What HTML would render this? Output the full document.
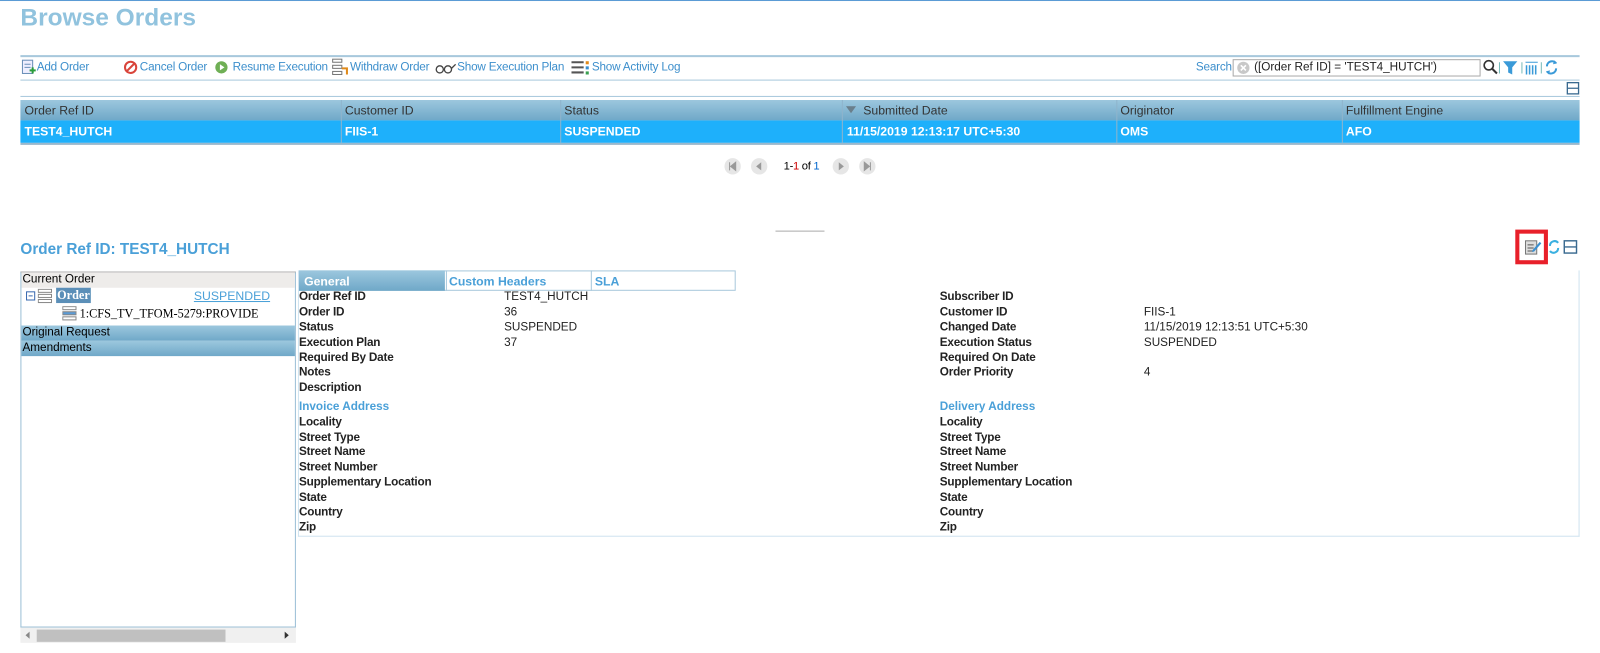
<!DOCTYPE html>
<html><head><meta charset="utf-8"><style>
*{margin:0;padding:0;box-sizing:border-box}
body{width:1600px;height:652px;position:relative;background:#fff;font-family:"Liberation Sans",Arial,sans-serif;font-size:12px;color:#222;overflow:hidden}
#w{position:absolute;left:0;top:0;width:1568px;height:640px;transform:scale(1.0204);transform-origin:0 0}
.a{position:absolute;white-space:nowrap}
.tb{color:#3d8fcc;font-size:11.5px;top:60px;letter-spacing:-0.2px}
.hdr{background:linear-gradient(#9cc7de,#6fa8c8);color:#333;font-size:12px}
.lbl{font-weight:bold;color:#222;font-size:11.5px;letter-spacing:-0.2px}
.val{color:#222;font-size:11.5px}
.sec{color:#4aa0d8;font-weight:bold;font-size:11.5px}
.pg{width:16px;height:16px;border-radius:50%;background:#e6e6e6;top:155px}
</style></head><body><div id="w">
<div class="a" style="left:0;top:0;width:1568px;height:1px;background:#5b9bd5"></div>
<div class="a" style="left:20px;top:4px;font-size:24px;font-weight:bold;color:#91c3de">Browse Orders</div>

<div class="a" style="left:20px;top:54px;width:1528px;height:2px;background:#a8c8dc"></div>
<div class="a" style="left:20px;top:78px;width:1528px;height:1px;background:#a8c8dc"></div>
<svg class="a" style="left:20px;top:58px" width="16" height="16"><rect x="2" y="1" width="10" height="13" fill="#eef" stroke="#6a8fb8"/><line x1="4" y1="5" x2="10" y2="5" stroke="#6a8fb8"/><line x1="4" y1="8" x2="10" y2="8" stroke="#6a8fb8"/><rect x="9" y="10" width="6" height="2" fill="#2a9d3a"/><rect x="11" y="8" width="2" height="6" fill="#2a9d3a"/></svg>
<div class="a tb" style="left:36px">Add Order</div>
<svg class="a" style="left:121px;top:59px" width="14" height="14"><circle cx="7" cy="7" r="5.5" fill="none" stroke="#d9453b" stroke-width="2"/><line x1="3.5" y1="10.5" x2="10.5" y2="3.5" stroke="#d9453b" stroke-width="2"/></svg>
<div class="a tb" style="left:137px">Cancel Order</div>
<svg class="a" style="left:210px;top:59px" width="14" height="14"><circle cx="7" cy="7" r="6" fill="#6faf55"/><path d="M5.5 4v6l4.5-3z" fill="#fff"/></svg>
<div class="a tb" style="left:228px">Resume Execution</div>
<svg class="a" style="left:325px;top:57px" width="18" height="18"><rect x="1" y="1" width="9" height="3" fill="none" stroke="#777"/><rect x="1" y="7" width="9" height="3" fill="none" stroke="#777"/><rect x="1" y="13" width="9" height="3" fill="none" stroke="#777"/><path d="M10 10h5v6" fill="none" stroke="#e08a1a" stroke-width="2"/></svg>
<div class="a tb" style="left:343px">Withdraw Order</div>
<svg class="a" style="left:426px;top:61px" width="22" height="12"><circle cx="5" cy="7" r="3.5" fill="none" stroke="#444" stroke-width="1.3"/><circle cx="13" cy="7" r="3.5" fill="none" stroke="#444" stroke-width="1.3"/><path d="M8.5 7h1M16.5 6l4-4" stroke="#444" stroke-width="1.3"/></svg>
<div class="a tb" style="left:448px">Show Execution Plan</div>
<svg class="a" style="left:560px;top:59px" width="18" height="14"><path d="M0 2h12M0 7h12M0 12h12" stroke="#555" stroke-width="2"/><rect x="14" y="1" width="3" height="3" fill="#e08a1a"/><rect x="14" y="6" width="3" height="3" fill="#3a8fd0"/><rect x="14" y="11" width="3" height="3" fill="#3aa050"/></svg>
<div class="a tb" style="left:580px">Show Activity Log</div>

<div class="a tb" style="left:1172px">Search</div>
<div class="a" style="left:1208px;top:58px;width:243px;height:17px;border:1px solid #aaa;background:#fff"></div>
<svg class="a" style="left:1212px;top:60px" width="13" height="13"><circle cx="6.5" cy="6.5" r="6" fill="#c8c8c8"/><path d="M4 4l5 5M9 4l-5 5" stroke="#fff" stroke-width="1.6"/></svg>
<div class="a" style="left:1229px;top:60px;font-size:11.5px;color:#222">([Order Ref ID] = 'TEST4_HUTCH')</div>
<svg class="a" style="left:1453px;top:58px" width="16" height="16"><circle cx="6" cy="6" r="4.5" fill="none" stroke="#333" stroke-width="1.6"/><line x1="9.5" y1="9.5" x2="14" y2="14" stroke="#333" stroke-width="2"/></svg>
<div class="a" style="left:1469px;top:61px;width:1px;height:11px;background:#7bb"></div>
<svg class="a" style="left:1472px;top:59px" width="16" height="15"><path d="M1 1h14l-5 6v7l-4-2v-5z" fill="#3a9ad8"/></svg>
<div class="a" style="left:1491px;top:61px;width:1px;height:11px;background:#7bb"></div>
<svg class="a" style="left:1494px;top:59px" width="14" height="15"><path d="M1 2h12" stroke="#3a9ad8"/><path d="M2 5v9M5 5v9M8 5v9M11 5v9" stroke="#3a9ad8" stroke-width="1.5"/></svg>
<div class="a" style="left:1510px;top:61px;width:1px;height:11px;background:#7bb"></div>
<svg class="a" style="left:1513px;top:58px" width="15" height="16"><path d="M3 7a5 5 0 0 1 9-3M12 9a5 5 0 0 1-9 3" fill="none" stroke="#3a9ad8" stroke-width="2"/><path d="M10 1l3 3-4 1zM5 15l-3-3 4-1z" fill="#3a9ad8"/></svg>

<div class="a" style="left:20px;top:94px;width:1528px;height:1px;background:#a8c8dc"></div>
<svg class="a" style="left:1535px;top:80px" width="13" height="13"><rect x="1" y="1" width="11" height="11" fill="#fff" stroke="#3a6a90" stroke-width="1.3"/><line x1="1" y1="6.5" x2="12" y2="6.5" stroke="#3a6a90" stroke-width="1.3"/></svg>

<div class="a hdr" style="left:20px;top:98px;width:1528px;height:20px"></div>
<div class="a" style="left:20px;top:118px;width:1528px;height:22px;background:#1eb0fb"></div>
<div class="a" style="left:20px;top:140px;width:1528px;height:2px;background:#9ab8cc"></div>
<div class="a" style="left:334px;top:98px;width:1px;height:42px;background:#8fb4cc"></div>
<div class="a" style="left:549px;top:98px;width:1px;height:42px;background:#8fb4cc"></div>
<div class="a" style="left:825px;top:98px;width:1px;height:42px;background:#8fb4cc"></div>
<div class="a" style="left:1094px;top:98px;width:1px;height:42px;background:#8fb4cc"></div>
<div class="a" style="left:1315px;top:98px;width:1px;height:42px;background:#8fb4cc"></div>
<div class="a" style="left:24px;top:101px;color:#333">Order Ref ID</div>
<div class="a" style="left:338px;top:101px;color:#333">Customer ID</div>
<div class="a" style="left:553px;top:101px;color:#333">Status</div>
<svg class="a" style="left:829px;top:104px" width="10" height="8"><path d="M0 0h10l-5 7z" fill="#6a7f8c"/></svg>
<div class="a" style="left:846px;top:101px;color:#333">Submitted Date</div>
<div class="a" style="left:1098px;top:101px;color:#333">Originator</div>
<div class="a" style="left:1319px;top:101px;color:#333">Fulfillment Engine</div>
<div class="a" style="left:24px;top:122px;color:#fff;font-weight:bold">TEST4_HUTCH</div>
<div class="a" style="left:338px;top:122px;color:#fff;font-weight:bold">FIIS-1</div>
<div class="a" style="left:553px;top:122px;color:#fff;font-weight:bold">SUSPENDED</div>
<div class="a" style="left:830px;top:122px;color:#fff;font-weight:bold">11/15/2019 12:13:17 UTC+5:30</div>
<div class="a" style="left:1098px;top:122px;color:#fff;font-weight:bold">OMS</div>
<div class="a" style="left:1319px;top:122px;color:#fff;font-weight:bold">AFO</div>

<div class="a pg" style="left:710px"></div><svg class="a" style="left:710px;top:155px" width="16" height="16"><path d="M5 4v8M11 4v8l-5-4z" stroke="#999" fill="#999"/></svg>
<div class="a pg" style="left:736px"></div><svg class="a" style="left:736px;top:155px" width="16" height="16"><path d="M10 4v8l-5-4z" fill="#999"/></svg>
<div class="a" style="left:768px;top:157px;font-size:11px;color:#000;letter-spacing:-0.3px">1-<span style="color:#c00">1</span> of <span style="color:#06c">1</span></div>
<div class="a pg" style="left:816px"></div><svg class="a" style="left:816px;top:155px" width="16" height="16"><path d="M6 4v8l5-4z" fill="#999"/></svg>
<div class="a pg" style="left:842px"></div><svg class="a" style="left:842px;top:155px" width="16" height="16"><path d="M5 4v8l5-4zM11 4v8" stroke="#999" fill="#999"/></svg>

<div class="a" style="left:760px;top:226px;width:48px;height:1px;background:#aaa"></div>

<div class="a" style="left:20px;top:236px;font-size:15px;font-weight:bold;color:#4aa0d8">Order Ref ID: TEST4_HUTCH</div>
<div class="a" style="left:1485px;top:225px;width:32px;height:34px;border:4px solid #e8202a"></div>
<svg class="a" style="left:1493px;top:233px" width="18" height="18"><rect x="2" y="3" width="11" height="13" fill="#ddd" stroke="#777"/><path d="M4 7h6M4 10h6M4 13h5" stroke="#555"/><path d="M9 12l7-8 1.5 1.5-7 8-2 .5z" fill="#3a8fd0"/></svg>
<svg class="a" style="left:1516px;top:234px" width="14" height="16"><path d="M3 7a4.5 4.5 0 0 1 8-3M11 9a4.5 4.5 0 0 1-8 3" fill="none" stroke="#3ab0e0" stroke-width="2"/></svg>
<svg class="a" style="left:1532px;top:235px" width="14" height="14"><rect x="1" y="1" width="12" height="12" fill="#fff" stroke="#3a6a90" stroke-width="1.4"/><line x1="1" y1="7" x2="13" y2="7" stroke="#3a6a90" stroke-width="1.4"/></svg>

<div class="a" style="left:20px;top:266px;width:270px;height:349px;border:1px solid #9bbfd6;border-top:2px solid #b8b8b8"></div>
<div class="a" style="left:21px;top:267px;width:268px;height:15px;background:#eeecea"></div>
<div class="a" style="left:22px;top:268px;color:#000;font-size:11.5px">Current Order</div>
<svg class="a" style="left:25px;top:285px" width="12" height="10"><rect x="1" y="1" width="8" height="8" fill="#fff" stroke="#3a6ab0"/><line x1="3" y1="5" x2="7" y2="5" stroke="#3a6ab0"/></svg>
<svg class="a" style="left:37px;top:283px" width="14" height="15"><rect x="0.5" y="0.5" width="13" height="3" fill="#fff" stroke="#888"/><rect x="0.5" y="5.5" width="13" height="3" fill="#fff" stroke="#888"/><rect x="0.5" y="10.5" width="13" height="3" fill="#fff" stroke="#888"/></svg>
<div class="a" style="left:55px;top:282px;height:15px;background:#5b8fb8;color:#fff;font-family:'Liberation Serif',serif;font-weight:bold;padding:0 1px;line-height:15px">Order</div>
<div class="a" style="left:190px;top:283px;color:#4aa0d8;text-decoration:underline">SUSPENDED</div>
<svg class="a" style="left:61px;top:300px" width="14" height="16"><rect x="0.5" y="0.5" width="13" height="3" fill="#fff" stroke="#888"/><rect x="0.5" y="5.5" width="13" height="3" fill="#5b9bd5" stroke="#888"/><rect x="0.5" y="10.5" width="13" height="3" fill="#fff" stroke="#888"/></svg>
<div class="a" style="left:78px;top:300px;font-family:'Liberation Serif',serif;font-size:12px;color:#000">1:CFS_TV_TFOM-5279:PROVIDE</div>
<div class="a hdr" style="left:21px;top:319px;width:268px;height:15px"></div>
<div class="a hdr" style="left:21px;top:334px;width:268px;height:15px"></div>
<div class="a" style="left:22px;top:320px;color:#000;font-size:11.5px">Original Request</div>
<div class="a" style="left:22px;top:335px;color:#000;font-size:11.5px">Amendments</div>
<div class="a" style="left:20px;top:615px;width:270px;height:15px;background:#f0f0f0"></div>
<div class="a" style="left:36px;top:617px;width:185px;height:12px;background:#c0c0c0"></div>
<svg class="a" style="left:24px;top:618px" width="6" height="9"><path d="M5 1v7l-4-3.5z" fill="#888"/></svg>
<svg class="a" style="left:278px;top:618px" width="6" height="9"><path d="M1 1v7l4-3.5z" fill="#333"/></svg>

<div class="a" style="left:292px;top:265px;width:1256px;height:261px;border:1px solid #cfe3f0;border-top:none"></div>
<div class="a" style="left:293px;top:265px;width:428px;height:20px;border:1px solid #a8c8dc;background:#fff"></div>
<div class="a hdr" style="left:293px;top:265px;width:143px;height:20px"></div>
<div class="a" style="left:437px;top:265px;width:1px;height:20px;background:#a8c8dc"></div>
<div class="a" style="left:579px;top:265px;width:1px;height:20px;background:#a8c8dc"></div>
<div class="a" style="left:298px;top:269px;color:#fff;font-weight:bold">General</div>
<div class="a" style="left:440px;top:269px;color:#4aa0d8;font-weight:bold">Custom Headers</div>
<div class="a" style="left:583px;top:269px;color:#4aa0d8;font-weight:bold">SLA</div>

<div class="a lbl" style="left:293px;top:285px">Order Ref ID</div><div class="a val" style="left:494px;top:285px">TEST4_HUTCH</div>
<div class="a lbl" style="left:293px;top:300px">Order ID</div><div class="a val" style="left:494px;top:300px">36</div>
<div class="a lbl" style="left:293px;top:315px">Status</div><div class="a val" style="left:494px;top:315px">SUSPENDED</div>
<div class="a lbl" style="left:293px;top:330px">Execution Plan</div><div class="a val" style="left:494px;top:330px">37</div>
<div class="a lbl" style="left:293px;top:345px">Required By Date</div>
<div class="a lbl" style="left:293px;top:359px">Notes</div>
<div class="a lbl" style="left:293px;top:374px">Description</div>
<div class="a sec" style="left:293px;top:393px">Invoice Address</div>
<div class="a lbl" style="left:293px;top:408px">Locality</div>
<div class="a lbl" style="left:293px;top:423px">Street Type</div>
<div class="a lbl" style="left:293px;top:437px">Street Name</div>
<div class="a lbl" style="left:293px;top:452px">Street Number</div>
<div class="a lbl" style="left:293px;top:467px">Supplementary Location</div>
<div class="a lbl" style="left:293px;top:482px">State</div>
<div class="a lbl" style="left:293px;top:496px">Country</div>
<div class="a lbl" style="left:293px;top:511px">Zip</div>

<div class="a lbl" style="left:921px;top:285px">Subscriber ID</div>
<div class="a lbl" style="left:921px;top:300px">Customer ID</div><div class="a val" style="left:1121px;top:300px">FIIS-1</div>
<div class="a lbl" style="left:921px;top:315px">Changed Date</div><div class="a val" style="left:1121px;top:315px">11/15/2019 12:13:51 UTC+5:30</div>
<div class="a lbl" style="left:921px;top:330px">Execution Status</div><div class="a val" style="left:1121px;top:330px">SUSPENDED</div>
<div class="a lbl" style="left:921px;top:345px">Required On Date</div>
<div class="a lbl" style="left:921px;top:359px">Order Priority</div><div class="a val" style="left:1121px;top:359px">4</div>
<div class="a sec" style="left:921px;top:393px">Delivery Address</div>
<div class="a lbl" style="left:921px;top:408px">Locality</div>
<div class="a lbl" style="left:921px;top:423px">Street Type</div>
<div class="a lbl" style="left:921px;top:437px">Street Name</div>
<div class="a lbl" style="left:921px;top:452px">Street Number</div>
<div class="a lbl" style="left:921px;top:467px">Supplementary Location</div>
<div class="a lbl" style="left:921px;top:482px">State</div>
<div class="a lbl" style="left:921px;top:496px">Country</div>
<div class="a lbl" style="left:921px;top:511px">Zip</div>
</div></body></html>
